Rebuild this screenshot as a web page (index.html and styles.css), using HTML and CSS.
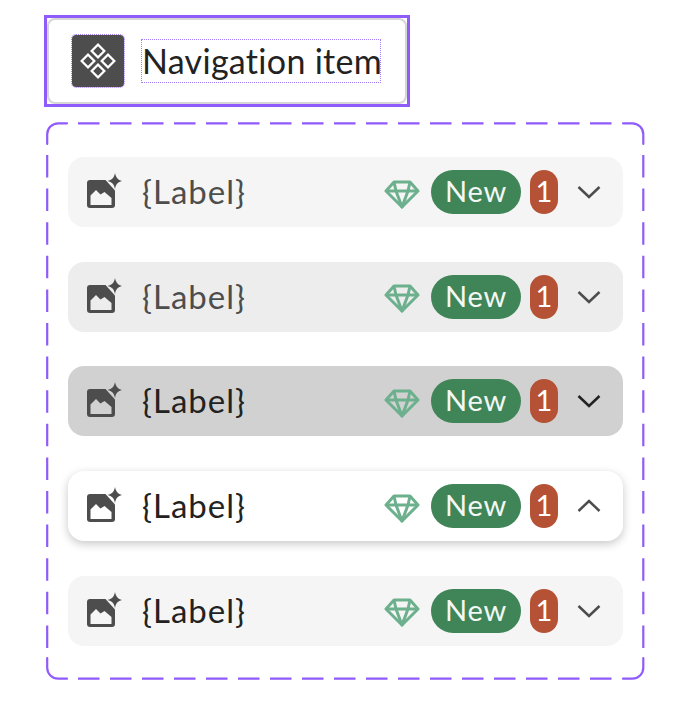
FILE: index.html
```html
<!DOCTYPE html>
<html lang="en">

<head>
    <meta charset="UTF-8">
    <title>Navigation item</title>
    <link rel="stylesheet" href="styles.css">
</head>

<body>
    <svg class="defs" width="0" height="0">
        <symbol id="img" viewBox="0 0 36 36">
            <path d="M4 8H19.500L29 18.500V33a3 3 0 0 1-3 3H4a3 3 0 0 1-3-3V11a3 3 0 0 1 3-3z" fill="#4d4d4d"></path>
            <path d="M4.500 33V23.500L10 18 14.500 22.500 18.500 20 25.500 26V33z" fill="var(--bg)"></path>
            <path d="M29 1C30 6 32 8 36.500 9 32 10 30 12 29 17 28 12 26 10 21.500 9 26 8 28 6 29 1z" fill="#4d4d4d"></path>
        </symbol>
        <symbol id="gem" viewBox="0 0 36 30">
            <g fill="none" stroke="#6cb08e" stroke-width="3" stroke-linejoin="round">
                <path d="M10 3H26L34 12 18 28 2 12z"></path>
                <path d="M2 12H34M10 3L12 12 18 28 24 12 26 3"></path>
            </g>
        </symbol>
        <symbol id="chev" viewBox="0 0 24 14">
            <path d="M1.500 2L12 12 22.500 2" fill="none" stroke="currentColor" stroke-width="2.500"></path>
        </symbol>
    </svg>

    <div class="head">
        <div class="head-card">
            <div class="head-icon">
                <svg width="36" height="36" viewBox="0 0 36 36">
                    <g fill="none" stroke="#fff" stroke-width="2.200">
                        <rect x="13.500" y="3.500" width="9" height="9" transform="rotate(45 18 8)"></rect>
                        <rect x="13.500" y="23.500" width="9" height="9" transform="rotate(45 18 28)"></rect>
                        <rect x="3.500" y="13.500" width="9" height="9" transform="rotate(45 8 18)"></rect>
                        <rect x="23.500" y="13.500" width="9" height="9" transform="rotate(45 28 18)"></rect>
                    </g>
                </svg>
            </div>
            <div class="head-label">Navigation item</div>
        </div>
    </div>

    <div class="group">
        <svg class="dash" width="599" height="558">
            <g fill="none" stroke="#8f5bfa" stroke-width="2.200" stroke-linecap="round">
                <path d="M1.200 22V12.300A11 11 0 0 1 12.200 1.300H21"></path>
                <path d="M577 1.300H586.300A11 11 0 0 1 597.300 12.300V22"></path>
                <path d="M597.300 536V545.700A11 11 0 0 1 586.300 556.700H577"></path>
                <path d="M21 556.700H12.200A11 11 0 0 1 1.200 545.700V536"></path>
                <path d="M32 1.300H566.700M32 556.700H566.700" stroke-linecap="butt" stroke-dasharray="21.500 10.500"></path>
                <path d="M1.200 33V526M597.300 33V526" stroke-linecap="butt" stroke-dasharray="22.500 11.100"></path>
            </g>
        </svg>

        <div class="row">
            <svg class="ic-img"><use href="#img"></use></svg>
            <span class="label">{Label}</span>
            <svg class="ic-gem"><use href="#gem"></use></svg>
            <span class="pill">New</span>
            <span class="count">1</span>
            <svg class="ic-chev"><use href="#chev"></use></svg>
        </div>
        <div class="row hover">
            <svg class="ic-img"><use href="#img"></use></svg>
            <span class="label">{Label}</span>
            <svg class="ic-gem"><use href="#gem"></use></svg>
            <span class="pill">New</span>
            <span class="count">1</span>
            <svg class="ic-chev"><use href="#chev"></use></svg>
        </div>
        <div class="row pressed">
            <svg class="ic-img"><use href="#img"></use></svg>
            <span class="label">{Label}</span>
            <svg class="ic-gem"><use href="#gem"></use></svg>
            <span class="pill">New</span>
            <span class="count">1</span>
            <svg class="ic-chev"><use href="#chev"></use></svg>
        </div>
        <div class="row open">
            <svg class="ic-img"><use href="#img"></use></svg>
            <span class="label">{Label}</span>
            <svg class="ic-gem"><use href="#gem"></use></svg>
            <span class="pill">New</span>
            <span class="count">1</span>
            <svg class="ic-chev up"><use href="#chev"></use></svg>
        </div>
        <div class="row active">
            <svg class="ic-img"><use href="#img"></use></svg>
            <span class="label">{Label}</span>
            <svg class="ic-gem"><use href="#gem"></use></svg>
            <span class="pill">New</span>
            <span class="count">1</span>
            <svg class="ic-chev"><use href="#chev"></use></svg>
        </div>
    </div>
</body>

</html>
```

FILE: styles.css
```css
body {
    margin: 0;
    padding: 15px 0 0 44px;
    background: #fff;
    font-family: "Lato", "Liberation Sans", sans-serif;
}

.defs {
    display: block;
    height: 0;
}

.head {
    width: 366px;
    height: 92px;
    box-sizing: border-box;
    border: 3px solid #8f5bfa;
}

.head-card {
    height: 86px;
    box-sizing: border-box;
    border: 2px solid #d6d6d6;
    border-radius: 8px;
    display: flex;
    align-items: center;
    padding-left: 23px;
    gap: 17px;
}

.head-icon {
    width: 52px;
    height: 52px;
    box-sizing: border-box;
    background: #4d4d4d;
    border-radius: 4px;
    outline: 1px dotted #a47bfb;
    display: flex;
    align-items: center;
    justify-content: center;
}

.head-label {
    width: 240px;
    height: 44px;
    box-sizing: border-box;
    border: 1px dotted #a47bfb;
    font-size: 34px;
    letter-spacing: .3px;
    line-height: 41px;
    text-align: center;
    white-space: nowrap;
    color: #222;
}

.group {
    position: relative;
    width: 599px;
    height: 558px;
    box-sizing: border-box;
    margin: 15px 0 0 2px;
    padding: 35px 22px;
    display: flex;
    flex-direction: column;
    gap: 34.700px;
}

.dash {
    position: absolute;
    top: 0;
    left: 0;
}

.row {
    --bg: #f5f5f5;
    height: 70px;
    flex: none;
    background: var(--bg);
    border-radius: 16px;
    display: flex;
    align-items: center;
    padding: 0 22px 0 18px;
    color: #4d4d4d;
}

.row.hover {
    --bg: #ededed;
}

.row.pressed {
    --bg: #d1d1d1;
    color: #222;
}

.row.open {
    --bg: #fff;
    color: #222;
    box-shadow: 0 3px 10px rgba(0, 0, 0, .22);
}

.row.active {
    color: #222;
}

.ic-img {
    width: 36px;
    height: 36px;
    flex: none;
    margin-bottom: 4px;
}

.label {
    margin-left: 20px;
    font-size: 33px;
    letter-spacing: 1px;
    line-height: 38px;
    padding-bottom: 2px;
    flex: 1;
}

.ic-gem {
    width: 36px;
    height: 30px;
    flex: none;
    margin-top: 3px;
}

.pill {
    margin-left: 11px;
    width: 90px;
    height: 44px;
    border-radius: 22px;
    background: #408558;
    color: #f4f8f5;
    font-size: 29px;
    letter-spacing: .8px;
    line-height: 41px;
    text-align: center;
}

.count {
    margin-left: 9px;
    width: 28px;
    height: 44px;
    border-radius: 14px;
    background: #b55134;
    color: #fff;
    font-size: 29px;
    line-height: 41px;
    text-align: center;
}

.ic-chev {
    width: 24px;
    height: 14px;
    flex: none;
    margin-left: 19px;
    color: #4d4d4d;
}

.pressed .ic-chev {
    color: #222;
}

.ic-chev.up {
    transform: scaleY(-1);
}
```
